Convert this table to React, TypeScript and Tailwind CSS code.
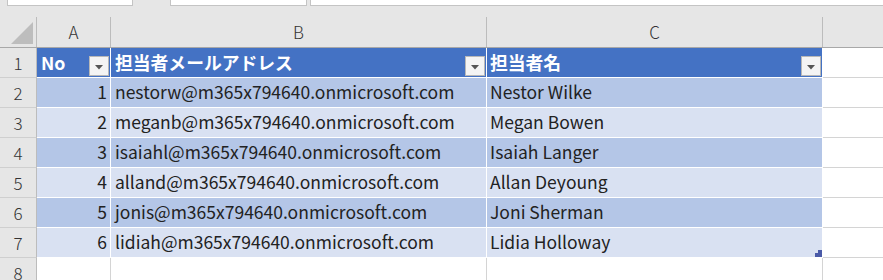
import React from "react";

const FONT = { fontFamily: '"Noto Sans CJK JP", "Noto Sans", sans-serif' };

type Person = { no: number; mail: string; name: string };

const people: Person[] = [
  { no: 1, mail: "nestorw@m365x794640.onmicrosoft.com", name: "Nestor Wilke" },
  { no: 2, mail: "meganb@m365x794640.onmicrosoft.com", name: "Megan Bowen" },
  { no: 3, mail: "isaiahl@m365x794640.onmicrosoft.com", name: "Isaiah Langer" },
  { no: 4, mail: "alland@m365x794640.onmicrosoft.com", name: "Allan Deyoung" },
  { no: 5, mail: "jonis@m365x794640.onmicrosoft.com", name: "Joni Sherman" },
  { no: 6, mail: "lidiah@m365x794640.onmicrosoft.com", name: "Lidia Holloway" },
];

function FilterButton() {
  return (
    <div className="absolute right-[1px] bottom-[1px] flex h-[20px] w-[20px] items-center justify-center border border-[#b8b8b8] bg-[#f4f4f4]">
      <svg width="8" height="5" viewBox="0 0 8 5" className="mt-[3px]">
        <path d="M0 0 H8 L4 4.5 Z" fill="#555" />
      </svg>
    </div>
  );
}

function RowHead({ n }: { n: number }) {
  return (
    <div className="flex w-[37px] shrink-0 items-center justify-center border-r border-b border-r-[#bcbcbc] border-b-[#cfcfcf] bg-[#e6e6e6] text-[17px] font-light text-[#333]">
      {n}
    </div>
  );
}

export default function App() {
  return (
    <div className="h-[280px] w-[883px] overflow-hidden bg-white" style={FONT}>
      {/* name box / formula bar strip */}
      <div className="relative h-[17px] bg-[#e6e6e6]">
        <div className="absolute left-[7px] top-0 h-[6px] w-[126px] border-x border-b border-[#c4c4c4] bg-white" />
        <div className="absolute left-[170px] top-0 h-[6px] w-[137px] border-x border-b border-[#c4c4c4] bg-white" />
        <div className="absolute left-[310px] top-0 h-[6px] right-0 border-l border-b border-[#c4c4c4] bg-white" />
      </div>

      {/* column headers */}
      <div className="flex h-[31px] border-b border-[#a8a8a8] bg-[#e6e6e6] text-[17px] font-light text-[#333]">
        <div className="relative w-[37px] shrink-0 border-r border-[#bcbcbc]">
          <svg width="22" height="22" viewBox="0 0 22 22" className="absolute left-[11px] top-[5px]">
            <path d="M22 0 V22 H0 Z" fill="#bdbdbd" />
          </svg>
        </div>
        <div className="flex w-[74px] shrink-0 items-center justify-center border-r border-[#bcbcbc]">A</div>
        <div className="flex w-[376px] shrink-0 items-center justify-center border-r border-[#bcbcbc]">B</div>
        <div className="flex w-[336px] shrink-0 items-center justify-center border-r border-[#bcbcbc]">C</div>
        <div className="flex-1" />
      </div>

      {/* table header row */}
      <div className="flex h-[30px]">
        <RowHead n={1} />
        <div className="relative flex w-[74px] shrink-0 items-center border-r border-b border-white bg-[#4472c4] pl-[4px] text-[17.8px] font-bold text-white">
          No
          <FilterButton />
        </div>
        <div className="relative flex w-[376px] shrink-0 items-center border-r border-b border-white bg-[#4472c4] pl-[4px] text-[17.8px] font-bold text-white">
          担当者メールアドレス
          <FilterButton />
        </div>
        <div className="relative flex w-[336px] shrink-0 items-center border-r border-b border-white bg-[#4472c4] pl-[3px] text-[17.8px] font-bold text-white">
          担当者名
          <FilterButton />
        </div>
        <div className="flex-1 border-b border-[#d4d4d4]" />
      </div>

      {/* data rows */}
      {people.map((p, i) => {
        const bg = i % 2 === 0 ? "bg-[#b4c6e7]" : "bg-[#d9e1f2]";
        const last = i === people.length - 1;
        return (
          <div key={p.no} className="flex h-[30px] text-[17.5px] text-[#222]">
            <RowHead n={i + 2} />
            <div className={`flex w-[74px] shrink-0 items-center justify-end border-r border-b border-white pr-[3px] ${bg}`}>
              {p.no}
            </div>
            <div className={`flex w-[376px] shrink-0 items-center border-r border-b border-white pl-[4px] ${bg}`}>
              {p.mail}
            </div>
            <div className={`relative flex w-[336px] shrink-0 items-center border-r border-b border-white pl-[3px] ${bg}`}>
              {p.name}
              {last && (
                <svg width="7" height="7" viewBox="0 0 7 7" className="absolute right-0 bottom-0">
                  <path d="M3 0 H7 V7 H0 V3 H3 Z" fill="#4a5aa8" />
                </svg>
              )}
            </div>
            <div className="flex-1 border-b border-[#d4d4d4]" />
          </div>
        );
      })}

      {/* empty row 8 */}
      <div className="flex h-[30px]">
        <RowHead n={8} />
        <div className="w-[74px] shrink-0 border-r border-b border-[#d4d4d4]" />
        <div className="w-[376px] shrink-0 border-r border-b border-[#d4d4d4]" />
        <div className="w-[336px] shrink-0 border-r border-b border-[#d4d4d4]" />
        <div className="flex-1 border-b border-[#d4d4d4]" />
      </div>
    </div>
  );
}
